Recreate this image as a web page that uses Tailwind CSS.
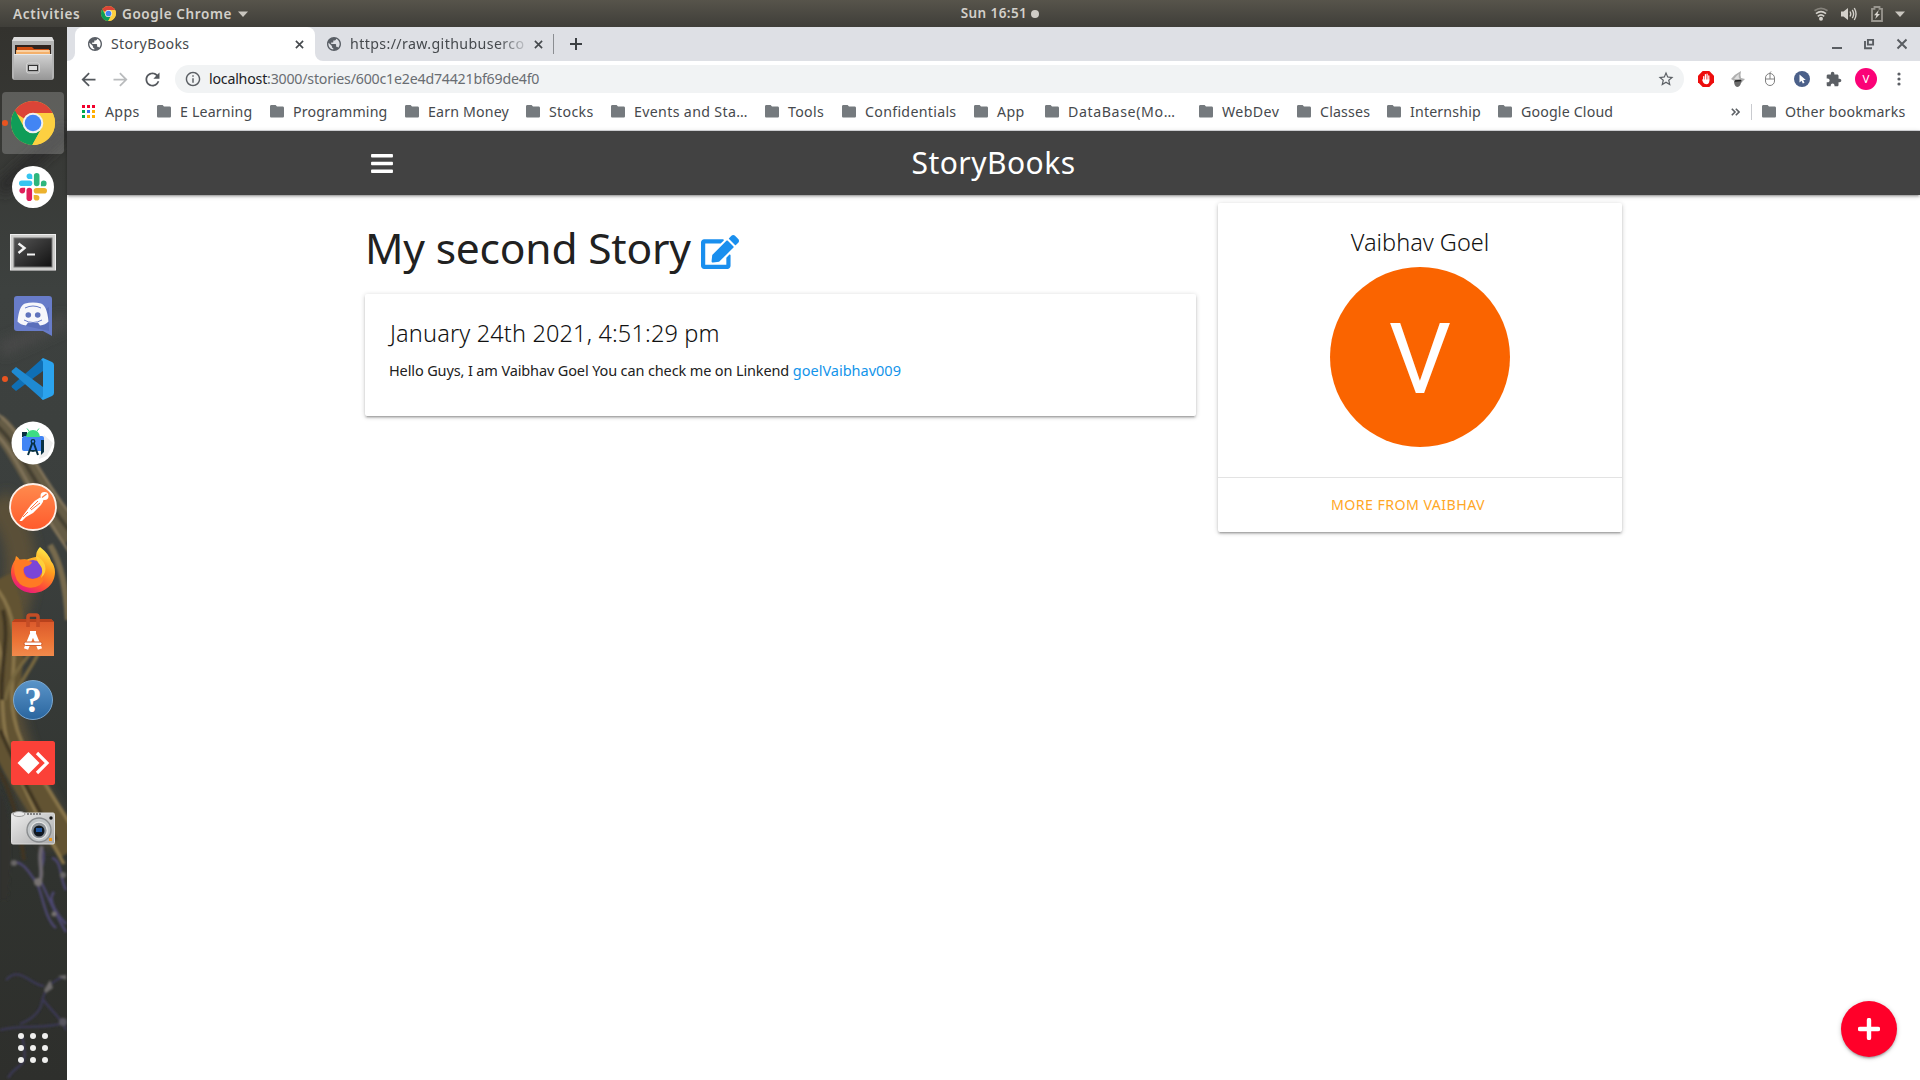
<!DOCTYPE html>
<html lang="en">
<head>
<meta charset="utf-8">
<title>StoryBooks</title>
<script src="https://cdn.jsdelivr.net/npm/@tailwindcss/browser@4"></script>
</head>
<body class="h-[1080px] w-[1920px] overflow-hidden bg-white font-['Noto_Sans','Open_Sans',sans-serif] flex flex-col">

<svg width="0" height="0" class="absolute">
  <defs>
    <symbol id="folder" viewBox="0 0 14 13"><path d="M1.4 0h4.2L7 1.6h5.6c.8 0 1.4.6 1.4 1.4v8.2c0 .8-.6 1.4-1.4 1.4H1.4C.6 12.600 0 12 0 11.200V1.400C0 .6.6 0 1.400 0z" fill="#757a7e"/></symbol>
    <symbol id="globe" viewBox="2 2 20 20"><path fill="#5a5f66" d="M12 2C6.480 2 2 6.480 2 12s4.480 10 10 10 10-4.480 10-10S17.520 2 12 2zm-1 17.930c-3.950-.49-7-3.850-7-7.930 0-.62.08-1.210.21-1.790L9 15v1c0 1.100.9 2 2 2v1.930zm6.900-2.540c-.26-.81-1-1.390-1.900-1.390h-1v-3c0-.55-.45-1-1-1H8v-2h2c.55 0 1-.45 1-1V7h2c1.100 0 2-.9 2-2v-.41c2.930 1.190 5 4.060 5 7.410 0 2.080-.8 3.970-2.100 5.390z"/></symbol>
    <symbol id="chrome" viewBox="0 0 44 44">
      <circle cx="22" cy="22" r="22" fill="#fdd041"/>
      <path d="M2.950 11A22 22 0 0 1 41.050 11L41.500 12H22a10 10 0 0 0-9 5.500z" fill="#db4437"/>
      <path d="M2.950 11A22 22 0 0 0 21.300 44L30.700 27A10 10 0 0 1 13.300 27L4 9.400z" fill="#0f9d58"/>
      <path d="M22 12h19.600A22 22 0 0 1 21.300 44l9.400-17A10 10 0 0 0 22 12z" fill="#fdd041"/>
      <circle cx="22" cy="22" r="10.300" fill="#f1f1f1"/><circle cx="22" cy="22" r="8.300" fill="#4285f4"/>
    </symbol>
    <symbol id="close" viewBox="0 0 10 10"><path d="M1 1l8 8M9 1L1 9" stroke="#45494d" stroke-width="1.800"/></symbol>
  </defs>
</svg>

<!-- GNOME top bar -->
<header class="h-[27px] shrink-0 grid grid-cols-3 items-center bg-linear-to-b from-[#57544b] to-[#3f3e39] text-[13.5px] font-semibold text-[#d3d0ca]">
  <div class="flex items-center pl-[13px]">
    <span class="w-[88px] tracking-[0.730px] pt-px">Activities</span>
    <svg class="w-[15px] h-[15px]"><use href="#chrome"/></svg>
    <span class="pl-1.5 pt-px w-[116px] tracking-[0.6px] whitespace-nowrap">Google Chrome</span>
    <svg class="ml-1.5 w-[10px] h-[6px]" viewBox="0 0 10 6"><path d="M0 .5h10L5 6z" fill="#c9c6bf"/></svg>
  </div>
  <div class="flex items-center justify-center pl-20">
    <span class="tracking-[0.410px]">Sun 16:51</span>
    <span class="ml-1 size-2 rounded-full bg-[#cfccc6]"></span>
  </div>
  <div class="flex items-center justify-end pr-[15px]">
    <svg class="w-[14px] h-[14px]" viewBox="0 0 14 14" fill="none" stroke-width="1.700"><path d="M.5 3.800Q7-1 13.500 3.800" stroke="#85827b"/><path d="M2 6.600Q7 2.600 12 6.600M3.800 9.300Q7 6.600 10.200 9.300" stroke="#d3d0ca"/><circle cx="7" cy="11.800" r="2" fill="#d3d0ca"/></svg>
    <svg class="ml-[13px] w-[16px] h-[14px]" viewBox="0 0 16 14" fill="none" stroke="#d3d0ca" stroke-width="1.400"><path d="M0 4.500h2.500L7 1v12L2.500 9.500H0z" fill="#d3d0ca" stroke="none"/><path d="M9 4.500q1.500 2.500 0 5M11.300 2.800q2.600 4.200 0 8.400M13.300 1q3.500 6 0 12"/></svg>
    <svg class="ml-[14px] w-[12px] h-[16px]" viewBox="0 0 12 16"><path d="M1 2.800h2.500V1h5v1.800H11V15H1z" fill="none" stroke="#99968f" stroke-width="1.800"/><path d="M7.800 4L3 9.200h2.400L4.200 13 9 7.900H6.500z" fill="#d8d5cf"/></svg>
    <svg class="ml-3 w-[10px] h-[6px]" viewBox="0 0 10 6"><path d="M0 .5h10L5 6z" fill="#c9c6bf"/></svg>
  </div>
</header>

<div class="flex grow min-h-0">
  <!-- Dock -->
  <nav class="relative w-[67px] shrink-0 flex flex-col items-center pr-px bg-[#343531] overflow-hidden">
    <svg class="absolute inset-0" width="67" height="1053" viewBox="0 27 67 1053" fill="none">
      <defs>
        <linearGradient id="wall" x1="0" y1="0" x2="0" y2="1"><stop offset="0" stop-color="#33322e"/><stop offset=".25" stop-color="#3d413f"/><stop offset=".5" stop-color="#3b3f3d"/><stop offset=".8" stop-color="#30332f"/><stop offset="1" stop-color="#2e2f2c"/></linearGradient>
        <filter id="soft"><feGaussianBlur stdDeviation="1.1"/></filter>
        <filter id="softer" x="-50%" y="-20%" width="200%" height="140%"><feGaussianBlur stdDeviation="6"/></filter>
      </defs>
      <rect y="27" width="67" height="1053" fill="url(#wall)"/>
      <g filter="url(#softer)"><path d="M0 190L67 130" stroke="#2c2c29" stroke-width="14"/><path d="M0 350L67 320" stroke="#484a48" stroke-width="14"/><path d="M-4 500C20 530 30 560 10 620S10 760 60 840" stroke="#5a4f38" stroke-width="30"/></g>
      <g filter="url(#soft)">
        <path d="M-4 424C20 444 35 490 72 538" stroke="#655b45" stroke-width="22"/>
        <path d="M-4 413C22 430 38 474 72 516M-4 434C16 452 34 502 72 556" stroke="#83765c" stroke-width="2.500"/>
        <path d="M-4 425C19 444 36 490 72 534" stroke="#453f31" stroke-width="4"/>
        <path d="M50 545C62 565 66 590 68 620" stroke="#776b4d" stroke-width="6"/>
        <path d="M-3 580C12 610 12 640 4 690S12 760 72 850" stroke="#625332" stroke-width="30"/>
        <path d="M-2 590C20 620 14 650 12 690S24 750 70 824M-3 640C6 660 -2 710 8 744S35 812 64 864" stroke="#88754a" stroke-width="3.500"/>
        <path d="M34 648C20 668 12 672 5 700M40 650C30 672 16 684 14 705" stroke="#77673f" stroke-width="3.500"/>
        <path d="M-2 770C12 790 20 830 24 860M0 730C18 770 32 800 56 840M3 610C10 640 0 660 2 700" stroke="#3f3624" stroke-width="4"/>
        <path d="M0 790C10 810 14 840 8 900H0z" fill="#30322f"/>
        <path d="M14 862C24 862 30 874 36 882S44 918 56 928M42 848C48 862 36 872 42 884S56 916 66 932M52 858C62 860 60 880 66 890M54 892C46 900 60 918 66 924" stroke="#4c4670" stroke-width="2.500"/>
        <path d="M42 846C36 860 46 872 38 886" stroke="#6d686e" stroke-width="4"/>
        <circle cx="14" cy="863" r="3" fill="#696666"/><circle cx="38" cy="882" r="4" fill="#777271"/><circle cx="63" cy="875" r="3" fill="#6b6869"/><circle cx="54" cy="914" r="2.500" fill="#777271"/>
        <path d="M6 980C20 965 30 985 44 986M66 976C52 980 44 990 42 1002S30 1020 20 1024M42 998C50 1010 60 1016 66 1030M0 1030C20 1024 46 1030 66 1022M8 1078C18 1060 30 1072 22 1036" stroke="#3b3955" stroke-width="2.300"/>
        <path d="M44 990l6-10 3 8-7 5zM58 976l8-1v5z" fill="#6e6c6c"/><circle cx="63" cy="1022" r="4" fill="#56545e"/>
      </g>
    </svg>

    <div class="relative size-16 shrink-0">
      <svg class="size-16" viewBox="0 0 64 64"><defs><linearGradient id="metal" x1="0" y1="0" x2="0" y2="1"><stop offset="0" stop-color="#d2d2d2"/><stop offset="1" stop-color="#969696"/></linearGradient></defs>
        <path d="M13 10h38l2 4v36q0 3-3 3H14q-3 0-3-3V14z" fill="#b4b4b4"/><path d="M13 10h38l2 4H11z" fill="#ddd"/><rect x="14" y="18" width="36" height="9" fill="#30241f"/><path d="M16 20h15l2 2h15v5H16z" fill="#cf4d10"/><path d="M15 23h34v4H15z" fill="#f4b06a"/><path d="M16 24h32" stroke="#fff0d8"/><path d="M13 27h38v26H13z" fill="url(#metal)"/><path d="M13 27.500h38" stroke="#e8e8e8"/><rect x="25.500" y="36" width="13" height="10" rx="2" fill="#a9a9a9" stroke="#d5d5d5"/><rect x="27.500" y="38.500" width="9" height="5" fill="#ddd" stroke="#333"/></svg>
    </div>
    <div class="relative size-16 shrink-0 p-px">
      <div class="size-[62px] rounded bg-white/20 flex items-center justify-center"><svg class="size-11"><use href="#chrome"/></svg></div>
      <span class="absolute top-[29px] left-px size-[6px] rounded-full bg-[#e95420]"></span>
    </div>
    <div class="relative size-16 shrink-0">
      <svg class="size-16" viewBox="0 0 64 64"><circle cx="32" cy="32" r="21" fill="#fff"/>
        <g id="slack-arm"><path d="M20.800 28.300h7.700" stroke="#36c5f0" stroke-width="5.600" stroke-linecap="round"/><path d="M31.300 24.100v-2.900a2.850 2.850 0 1 0-2.850 2.900z" fill="#36c5f0"/></g>
        <path d="M35.700 20.800v7.700" stroke="#2eb67d" stroke-width="5.600" stroke-linecap="round"/><path d="M39.900 31.300h2.900a2.850 2.850 0 1 0-2.900-2.850z" fill="#2eb67d"/>
        <path d="M43.200 35.700h-7.700" stroke="#ecb22e" stroke-width="5.600" stroke-linecap="round"/><path d="M32.700 39.900v2.900a2.850 2.850 0 1 0 2.850-2.900z" fill="#ecb22e"/>
        <path d="M28.300 43.200v-7.700" stroke="#e01e5a" stroke-width="5.600" stroke-linecap="round"/><path d="M24.100 32.700h-2.900a2.850 2.850 0 1 0 2.900 2.850z" fill="#e01e5a"/></svg>
    </div>
    <div class="relative size-16 shrink-0">
      <svg class="size-16" viewBox="0 -1 64 64"><defs><linearGradient id="term" x1="0" y1="0" x2="1" y2="1"><stop offset="0" stop-color="#555"/><stop offset=".5" stop-color="#333"/><stop offset="1" stop-color="#111"/></linearGradient></defs><rect x="9.500" y="14.500" width="45" height="36" fill="#cfcfcd" stroke="#eee"/><path d="M9 50.500h46" stroke="#999"/><rect x="13" y="18" width="38" height="29" fill="url(#term)" stroke="#777"/><path d="M17.500 23.500l6 4.500-6 5" fill="none" stroke="#f3f3f3" stroke-width="2.400"/><path d="M26 34.500h8" stroke="#f3f3f3" stroke-width="2"/></svg>
    </div>
    <div class="relative size-16 shrink-0">
      <svg class="size-16" viewBox="0 0 64 64"><path d="M16 13h32q3 0 3 3v37l-9-5H16q-3 0-3-3V16q0-3 3-3z" fill="#687cc9"/><path d="M20 42l28 6V24z" fill="#5b6fbb"/><path d="M24 20.500q8-2 16 0 6 2 7.500 18-3 3.500-8.500 4l-2-3q-5 1-10 0l-2 3q-5.500-.5-8.500-4Q18 22.500 24 20.500z" fill="#f7f7fb"/><path d="M24 25q8-4 16 0M23 37q9 5 18 0" fill="none" stroke="#687cc9"/><circle cx="27.300" cy="32" r="2.800" fill="#6073bd"/><circle cx="36.700" cy="32" r="2.800" fill="#6073bd"/></svg>
    </div>
    <div class="relative size-16 shrink-0">
      <svg class="size-16" viewBox="0 0 64 64"><path d="M42 11v13L15 44l-4-3.500q-1-1 0-2z" fill="#0f6fb5"/><path d="M42 53V40L15 20l-4 3.500q-1 1 0 2z" fill="#1f8ad2"/><path d="M42 11l9 4q2 1 2 3v28q0 2-2 3l-9 4-2-2q2 0 2-3V16q0-3-2-3z" fill="#2ba3ee"/></svg>
      <span class="absolute top-[29px] left-px size-[6px] rounded-full bg-[#e95420]"></span>
    </div>
    <div class="relative size-16 shrink-0">
      <svg class="size-16" viewBox="0 0 64 64"><circle cx="32" cy="32" r="21.500" fill="#fff"/><path d="M43 24l9 8-6 13-8 3z" fill="#eee"/><path d="M21 21h5v5h-5z" fill="#073042"/><path d="M23 25h18q2 0 2 2v13H23q-2 0-2-2V27z" fill="#4285f4"/><path d="M25 26q1-7 7-7t7 7z" fill="#3ddc84"/><path d="M28 20l-2-2.500M36 20l2-2.500" stroke="#3ddc84"/><path d="M40 29h3v12l-3 3z" fill="#073042"/><path d="M32 30l-5 14M32 30l5 14M28.500 39q3.500 2 7 0" stroke="#073042" stroke-width="2" fill="none"/><circle cx="32" cy="30.500" r="1.800" fill="#4285f4" stroke="#073042" stroke-width="1.300"/></svg>
    </div>
    <div class="relative size-16 shrink-0">
      <svg class="size-16" viewBox="0 0 64 64"><defs><linearGradient id="pm" x1="0" y1="0" x2="0" y2="1"><stop offset="0" stop-color="#ff8b4e"/><stop offset="1" stop-color="#ff5a2c"/></linearGradient></defs><circle cx="32" cy="32" r="23" fill="url(#pm)" stroke="#fdf0e8" stroke-width="1.800"/><circle cx="43.500" cy="21" r="4" fill="#fff"/><path d="M41 22.500l4.500-3.500" stroke="#ff7a43" stroke-width="1.200"/><path d="M39 22.500q-6 3-9.500 8l-6 8-4 6-1 1.500h2.500l4-4 7-4 8-8q3-4 2.500-6z" fill="#fff"/><path d="M37 26l-8 8M39 28l-9 7M27 37l-5 5" stroke="#ff7540"/></svg>
    </div>
    <div class="relative size-16 shrink-0">
      <svg class="size-16" viewBox="0 0 64 64"><defs><linearGradient id="ff" x1=".8" y1="0" x2=".3" y2="1"><stop offset="0" stop-color="#fff44f"/><stop offset=".4" stop-color="#ff9d1e"/><stop offset=".75" stop-color="#ff4a3a"/><stop offset="1" stop-color="#e31587"/></linearGradient></defs><path d="M39 8q9 7 11 14 4 5 4 11c0 12-10 21-22 21S10 45 10 33q0-6 4-12l1-4q2 1 4 4 3-1 7-.5Q32 18 35 18q0-6 4-10z" fill="url(#ff)"/><circle cx="32" cy="30.500" r="9.500" fill="#7a45d8"/><path d="M14 21q5-1 11 0l6 2q-1 3-5 4-4 1-4 5 1 8 9 8 9 0 11-7 3 8-3 13-10 6-20-1-8-8-5-24z" fill="#ff7a24"/><path d="M35 17q6 2 9 9 2 8-4 13 3-8-1-13-3-3-4-9z" fill="#ffcf3a"/></svg>
    </div>
    <div class="relative size-16 shrink-0">
      <svg class="size-16" viewBox="0 0 64 64"><defs><linearGradient id="bag" x1="0" y1="0" x2="0" y2="1"><stop offset="0" stop-color="#d9562a"/><stop offset=".6" stop-color="#ec7436"/><stop offset="1" stop-color="#f08a4c"/></linearGradient></defs><path d="M11 19l3-3h36l3 3v34H11z" fill="url(#bag)"/><path d="M11 19l3-3h36l3 3z" fill="#b8421c"/><path d="M27 24V14q0-2 2-2h6q2 0 2 2v10" fill="none" stroke="#c44d26" stroke-width="3.600"/><path d="M32 29l-7 17M32 29l7 17" stroke="#fff" stroke-width="4.500"/><path d="M29 29h6" stroke="#fff" stroke-width="2"/><rect x="23" y="39" width="18" height="3.500" rx="1.700" fill="#fff" stroke="#d35d2a"/></svg>
    </div>
    <div class="relative size-16 shrink-0 flex items-center justify-center">
      <span class="size-10 rounded-full border border-[#7ba9d3] bg-linear-to-b from-[#5a94c8] to-[#2a669f] text-white font-['Liberation_Serif',serif] font-bold text-[35px] leading-[39px] text-center mt-px">?</span>
    </div>
    <div class="relative size-16 shrink-0">
      <svg class="size-16" viewBox="0 0 64 64"><rect x="10" y="10" width="44" height="44" rx="2.500" fill="#fb4138"/><path d="M27.500 21L38.500 32l-11 11-11-11z" fill="#fff"/><path d="M36 22l10 10-10 10" fill="none" stroke="#fff" stroke-width="3.200"/></svg>
    </div>
    <div class="relative size-16 shrink-0">
      <svg class="size-16" viewBox="0 -1 64 64"><defs><linearGradient id="cam" x1="0" y1="0" x2="1" y2="1"><stop offset="0" stop-color="#eee"/><stop offset="1" stop-color="#a9a9a9"/></linearGradient></defs><rect x="10.500" y="17" width="43" height="31" rx="1.500" fill="url(#cam)" stroke="#ddd"/><ellipse cx="18" cy="18" rx="6" ry="2.500" fill="#e9e9e9" stroke="#999"/><path d="M26 18h14" stroke="#666" stroke-width="1.500" stroke-dasharray="2 1"/><circle cx="38" cy="34" r="12" fill="#c2c6c8" stroke="#8a8d8f" stroke-width="1.400"/><circle cx="38" cy="34.500" r="8.300" fill="#8b9196" stroke="#e5e5e5" stroke-width="1.300"/><circle cx="38" cy="35" r="5.500" fill="#111820"/><rect x="35" y="32" width="6" height="4" fill="#2056a0"/><circle cx="50" cy="22" r="1.700" fill="#111"/><rect x="48" y="42" width="3" height="3" fill="#f29a1e"/></svg>
    </div>
    <div class="relative mt-auto size-16 shrink-0 grid grid-cols-3 content-center justify-center gap-1.5 px-[17px]">
      <span class="size-[6px] rounded-full bg-[#efefee]"></span><span class="size-[6px] rounded-full bg-[#efefee]"></span><span class="size-[6px] rounded-full bg-[#efefee]"></span>
      <span class="size-[6px] rounded-full bg-[#efefee]"></span><span class="size-[6px] rounded-full bg-[#efefee]"></span><span class="size-[6px] rounded-full bg-[#efefee]"></span>
      <span class="size-[6px] rounded-full bg-[#efefee]"></span><span class="size-[6px] rounded-full bg-[#efefee]"></span><span class="size-[6px] rounded-full bg-[#efefee]"></span>
    </div>
  </nav>

  <div class="grow min-w-0 flex flex-col">
    <!-- Tab strip -->
    <div class="h-[34px] shrink-0 flex bg-white text-[14.2px] text-[#45494d] whitespace-nowrap">
      <div class="w-2 bg-[#dee0e5] rounded-br-lg"></div>
      <div class="w-[240px] bg-[#dee0e5]">
        <div class="h-full rounded-t-lg bg-white flex items-center pl-[13px] pr-[11px]">
          <svg class="size-[14px]"><use href="#globe"/></svg>
          <span class="pl-[9px] grow tracking-[0.310px]">StoryBooks</span>
          <svg class="size-[9px]"><use href="#close"/></svg>
        </div>
      </div>
      <div class="grow bg-[#dee0e5] rounded-bl-lg flex items-center pl-3">
        <svg class="size-[14px]"><use href="#globe"/></svg>
        <span class="ml-[9px] w-[176px] tracking-[0.390px] mask-r-from-84% mask-r-to-103%">https://raw.githubuserco</span>
        <svg class="ml-[8px] size-[9px]"><use href="#close"/></svg>
        <span class="ml-[10px] w-px h-5 bg-[#8b8e92]"></span>
        <svg class="ml-4 size-3" viewBox="0 0 12 12"><path d="M6 0v12M0 6h12" stroke="#3c4043" stroke-width="2"/></svg>
        <div class="ml-auto flex items-center pr-[13px]">
          <svg class="w-[75px] h-3" viewBox="0 0 75 12" fill="none" stroke="#595d62"><path d="M0 10h10" stroke-width="2"/><path d="M35.900 1.900h5.200v4.700h-5.200zM33 3v7.200h7" stroke-width="1.900"/><path d="M65.500 1.500l9 9M74.500 1.500l-9 9" stroke-width="2"/></svg>
        </div>
      </div>
    </div>

    <!-- Address row -->
    <div class="h-9 shrink-0 flex items-center bg-white pl-[11px] pr-[13px]">
      <svg class="size-[21px]" viewBox="0 0 24 24"><path fill="#54585d" d="M20 11H7.830l5.590-5.590L12 4l-8 8 8 8 1.410-1.410L7.830 13H20v-2z"/></svg>
      <svg class="ml-[11px] size-[21px] rotate-180" viewBox="0 0 24 24"><path fill="#b9bbbd" d="M20 11H7.830l5.590-5.590L12 4l-8 8 8 8 1.410-1.410L7.830 13H20v-2z"/></svg>
      <svg class="ml-[11px] size-[21px]" viewBox="0 0 24 24"><path fill="#54585d" d="M17.650 6.350C16.200 4.900 14.210 4 12 4c-4.420 0-7.990 3.580-7.990 8s3.570 8 7.990 8c3.730 0 6.840-2.550 7.730-6h-2.080c-.82 2.330-3.040 4-5.650 4-3.310 0-6-2.690-6-6s2.690-6 6-6c1.660 0 3.140.69 4.220 1.780L13 11h7V4l-2.350 2.350z"/></svg>
      <div class="ml-3 w-[1509px] h-7 rounded-full bg-[#f1f3f4] flex items-center pl-[10px] pr-[9px] text-[14.2px] tracking-[-0.210px] text-[#696d72]">
        <svg class="size-4" viewBox="1 1 22 22"><path fill="#5b5f64" d="M11 7h2v2h-2zm0 4h2v6h-2zm1-9C6.480 2 2 6.480 2 12s4.480 10 10 10 10-4.480 10-10S17.520 2 12 2zm0 18c-4.410 0-8-3.590-8-8s3.590-8 8-8 8 3.590 8 8-3.590 8-8 8z"/></svg>
        <span class="ml-2 grow"><span class="text-[#202124]">localhost</span>:3000/stories/600c1e2e4d74421bf69de4f0</span>
        <svg class="size-[18px]" viewBox="0 0 24 24"><path fill="#5b5f64" d="M22 9.240l-7.190-.62L12 2 9.190 8.630 2 9.240l5.460 4.730L5.820 21 12 17.270 18.180 21l-1.630-7.030L22 9.240zM12 15.400l-3.760 2.270 1-4.280-3.320-2.880 4.380-.38L12 6.100l1.710 4.040 4.380.38-3.320 2.880 1 4.280L12 15.400z"/></svg>
      </div>
      <div class="ml-auto flex items-center">
        <svg class="size-4" viewBox="0 0 16 16"><path d="M4.700 0h6.600L16 4.700v6.600L11.300 16H4.700L0 11.300V4.700z" fill="#ed0d0d"/><path d="M5.700 5.500V9M7.400 3.500V9M9.100 3.200V9M10.800 4.800V9" stroke="#fff" stroke-width="1.200" stroke-linecap="round"/><path d="M4 8.500l1.200 0h6.200v1q0 3.700-3 3.700-2.300 0-3.200-1.700z" fill="#fff"/></svg>
        <svg class="ml-4 size-4" viewBox="0 0 16 16"><path d="M1 8Q5 3 11 0q-1 4 0 7l4 1-4 4-5-1z" fill="#b0b0b0"/><path d="M4 8q3-4 5-5-1 4 1 5z" fill="#dedede"/><path d="M4 10l8-1-1 3q-1 4-4 4-3-1-3-6z" fill="#6a6a6a"/><path d="M5 10l6-.5" stroke="#222" stroke-width="1.500"/></svg>
        <svg class="ml-4 size-4" viewBox="0 0 16 16" fill="none" stroke="#808080"><rect x="3.500" y="2.500" width="9" height="12" rx="4.500"/><path d="M3.500 8h9M8 2.500V8M8 2.500Q8 1 9 .5"/></svg>
        <svg class="ml-4 size-4" viewBox="0 0 16 16"><circle cx="8" cy="8" r="8" fill="#4b6089"/><path d="M5.500 3.500v8l2-1.800 1.300 2.800 1.700-.8-1.300-2.700h2.600z" fill="#fff"/></svg>
        <svg class="ml-4 size-4" viewBox="1 0 23 23"><path fill="#5b5f64" d="M20.500 11H19V7c0-1.100-.9-2-2-2h-4V3.500C13 2.120 11.880 1 10.500 1S8 2.120 8 3.500V5H4c-1.100 0-1.990.9-1.990 2v3.800H3.500c1.490 0 2.700 1.210 2.700 2.700s-1.210 2.700-2.700 2.700H2V20c0 1.100.9 2 2 2h3.800v-1.500c0-1.490 1.210-2.700 2.700-2.700 1.490 0 2.700 1.210 2.700 2.700V22H17c1.100 0 2-.9 2-2v-4h1.500c1.380 0 2.500-1.120 2.500-2.500S21.880 11 20.500 11z"/></svg>
        <span class="ml-[13px] size-[22px] rounded-full bg-[#fb0277] text-white text-[11.5px] leading-[22px] text-center">V</span>
        <svg class="ml-[12px] w-[18px] h-4" viewBox="-1 0 18 16" fill="#5b5f64"><circle cx="9" cy="3" r="1.600"/><circle cx="9" cy="8" r="1.600"/><circle cx="9" cy="13" r="1.600"/></svg>
      </div>
    </div>

    <!-- Bookmarks -->
    <div class="h-[34px] shrink-0 flex items-center bg-white border-b border-[#d8d9dd] pb-[3px] pl-[15px] text-[14.2px] tracking-[0.160px] text-[#46494d] whitespace-nowrap">
      <div class="w-[75px] flex items-center"><svg class="size-[13px] mr-2.5" viewBox="0 0 13 13"><path d="M0 0h3v3H0zM5 0h3v3H5zM10 0h3v3h-3z" fill="#f2002c"/><path d="M0 5h3v3H0zM0 10h3v3H0z" fill="#00a94f"/><path d="M5 5h3v3H5z" fill="#3d6cf5"/><path d="M10 5h3v3h-3zM5 10h3v3H5zM10 10h3v3h-3z" fill="#ffae00"/></svg><span class="tracking-[0.3px]">Apps</span></div>
      <div class="w-[113px] flex items-center gap-[9px]"><svg class="w-3.5 h-[13px]"><use href="#folder"/></svg><span>E Learning</span></div>
      <div class="w-[135px] flex items-center gap-[9px]"><svg class="w-3.5 h-[13px]"><use href="#folder"/></svg><span>Programming</span></div>
      <div class="w-[121px] flex items-center gap-[9px]"><svg class="w-3.5 h-[13px]"><use href="#folder"/></svg><span>Earn Money</span></div>
      <div class="w-[85px] flex items-center gap-[9px]"><svg class="w-3.5 h-[13px]"><use href="#folder"/></svg><span class="tracking-[0.3px]">Stocks</span></div>
      <div class="w-[154px] flex items-center gap-[9px]"><svg class="w-3.5 h-[13px]"><use href="#folder"/></svg><span class="tracking-[0.340px]">Events and Sta…</span></div>
      <div class="w-[77px] flex items-center gap-[9px]"><svg class="w-3.5 h-[13px]"><use href="#folder"/></svg><span class="tracking-[0.290px]">Tools</span></div>
      <div class="w-[132px] flex items-center gap-[9px]"><svg class="w-3.5 h-[13px]"><use href="#folder"/></svg><span class="tracking-[0.3px]">Confidentials</span></div>
      <div class="w-[71px] flex items-center gap-[9px]"><svg class="w-3.5 h-[13px]"><use href="#folder"/></svg><span class="tracking-[0.4px]">App</span></div>
      <div class="w-[154px] flex items-center gap-[9px]"><svg class="w-3.5 h-[13px]"><use href="#folder"/></svg><span class="tracking-[0.6px]">DataBase(Mo…</span></div>
      <div class="w-[98px] flex items-center gap-[9px]"><svg class="w-3.5 h-[13px]"><use href="#folder"/></svg><span class="tracking-[0.4px]">WebDev</span></div>
      <div class="w-[90px] flex items-center gap-[9px]"><svg class="w-3.5 h-[13px]"><use href="#folder"/></svg><span>Classes</span></div>
      <div class="w-[111px] flex items-center gap-[9px]"><svg class="w-3.5 h-[13px]"><use href="#folder"/></svg><span>Internship</span></div>
      <div class="flex items-center gap-[9px]"><svg class="w-3.5 h-[13px]"><use href="#folder"/></svg><span>Google Cloud</span></div>
      <div class="ml-auto w-[189px] flex items-center">
        <svg class="w-[9px] h-[8px]" viewBox="0 0 9 8" fill="none" stroke="#5b5f64" stroke-width="1.600"><path d="M.8.8L4 4 .8 7.200M4.800.8L8 4 4.800 7.200"/></svg>
        <span class="ml-[11px] w-px h-4 bg-[#c9cbcf]"></span>
        <svg class="ml-[10px] w-3.5 h-[13px]"><use href="#folder"/></svg><span class="ml-[9px] tracking-[0.2px]">Other bookmarks</span>
      </div>
    </div>

    <!-- Page -->
    <div class="relative grow min-h-0 flex flex-col bg-white text-[#212121]">
      <nav class="z-10 h-16 shrink-0 bg-[#424242] text-white grid grid-cols-[1fr_auto_1fr] items-center shadow-[0_2px_2px_0_rgba(0,0,0,0.14),0_3px_1px_-2px_rgba(0,0,0,0.12),0_1px_5px_0_rgba(0,0,0,0.2)]">
        <svg class="ml-[304px] w-[22px] h-[25px]" viewBox="0 0 448 512" fill="#fff"><path d="M16 132h416c9 0 16-7 16-16V76c0-9-7-16-16-16H16C7 60 0 67 0 76v40c0 9 7 16 16 16zm0 160h416c9 0 16-7 16-16v-40c0-9-7-16-16-16H16c-9 0-16 7-16 16v40c0 9 7 16 16 16zm0 160h416c9 0 16-7 16-16v-40c0-9-7-16-16-16H16c-9 0-16 7-16 16v40c0 9 7 16 16 16z"/></svg>
        <span class="text-[30px] leading-[60px] tracking-[0.470px]">StoryBooks</span>
      </nav>

      <main class="ml-[298px] flex items-start gap-[22px]">
        <section class="w-[831px]">
          <h3 class="pt-[22px] h-[99px] flex text-[42.5px] leading-[62px] tracking-[-0.2px]">My second Story
            <svg class="ml-[10px] mt-[18px] w-[38px] h-[34px]" viewBox="0 0 576 512"><path fill="#1a8fee" d="M402.600 83.200l90.200 90.200c3.800 3.800 3.800 10 0 13.800L274.400 405.600l-92.800 10.300c-12.400 1.400-22.900-9.100-21.500-21.500l10.300-92.800L388.800 83.200c3.800-3.800 10-3.800 13.800 0zm162-22.900l-48.800-48.800c-15.200-15.200-39.900-15.200-55.200 0l-35.400 35.400c-3.800 3.800-3.800 10 0 13.800l90.200 90.200c3.800 3.800 10 3.800 13.800 0l35.400-35.400c15.200-15.300 15.200-40 0-55.200zM384 346.200V448H64V128h229.800c3.200 0 6.200-1.300 8.500-3.500l40-40c7.600-7.600 2.200-20.500-8.500-20.500H48C21.500 64 0 85.500 0 112v352c0 26.500 21.500 48 48 48h352c26.500 0 48-21.500 48-48V306.200c0-10.700-12.900-16-20.500-8.500l-40 40c-2.200 2.300-3.500 5.300-3.500 8.500z"/></svg>
          </h3>
          <div class="h-[122px] rounded-[2px] px-6 pt-[23px] shadow-[0_2px_2px_0_rgba(0,0,0,0.14),0_3px_1px_-2px_rgba(0,0,0,0.12),0_1px_5px_0_rgba(0,0,0,0.2)]">
            <div class="pl-px text-[23.5px] leading-8 font-light tracking-[0.150px] text-[#111]">January 24th 2021, 4:51:29 pm</div>
            <p class="mt-2.5 text-[14.5px] leading-[22px] tracking-[-0.130px]">Hello Guys, I am Vaibhav Goel You can check me on Linkend <a class="text-[#1294ea] tracking-normal">goelVaibhav009</a></p>
          </div>
        </section>

        <aside class="mt-2 w-[404px] h-[329px] rounded-[2px] flex flex-col shadow-[0_2px_2px_0_rgba(0,0,0,0.14),0_3px_1px_-2px_rgba(0,0,0,0.12),0_1px_5px_0_rgba(0,0,0,0.2)]">
          <div class="grow pt-[23px] flex flex-col items-center">
            <span class="text-[23.5px] leading-8 font-light text-[#111]">Vaibhav Goel</span>
            <span class="mt-[9px] size-[180px] rounded-full bg-[#fa6400] text-white font-['Roboto'] text-[98px] leading-[185px] text-center">V</span>
          </div>
          <div class="h-[55px] border-t border-[#e3e3e3] pl-[113px] text-[14.2px] leading-[54px] tracking-[0.430px] text-[#ffa726]">MORE FROM VAIBHAV</div>
        </aside>
      </main>

      <button class="absolute right-[23px] bottom-[23px] size-14 rounded-full bg-[#ff0029] flex items-center justify-center shadow-[0_2px_2px_0_rgba(0,0,0,0.14),0_3px_1px_-2px_rgba(0,0,0,0.12),0_1px_5px_0_rgba(0,0,0,0.2)]">
        <svg class="size-[22px]" viewBox="0 0 22 22"><path d="M11 2v18M2 11h18" stroke="#fff" stroke-width="4.400" stroke-linecap="round"/></svg>
      </button>
    </div>
  </div>
</div>
</body>
</html>
